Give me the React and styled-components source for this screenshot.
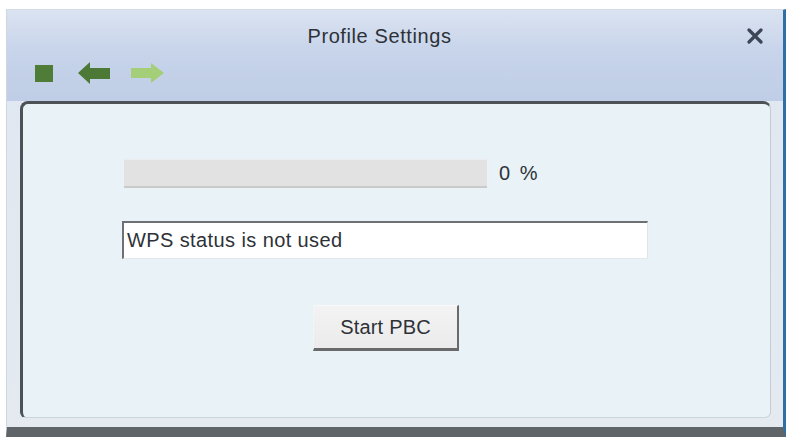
import React from "react";
import styled, { createGlobalStyle } from "styled-components";

const GlobalStyle = createGlobalStyle`
  html, body {
    margin: 0;
    padding: 0;
    background: #ffffff;
    overflow: hidden;
  }
  body {
    font-family: "Liberation Sans", Arial, sans-serif;
  }
`;

// Page wrapper, white strip above the dialog
const Page = styled.div`
  width: 792px;
  height: 437px;
  padding: 9px 6px 0 6px;
  box-sizing: border-box;
`;

// The dialog frame
const Window = styled.div`
  height: 428px;
  box-sizing: border-box;
  display: flex;
  flex-direction: column;
  border-left: 1px solid #cfd6de;
  border-top: 1px solid #d6dce3;
  border-right: 3px solid #2f6fa6;
  border-bottom: 10px solid #5f6469;
  background: linear-gradient(to bottom, #dfe7f1 0%, #e4eaf0 100%);
`;

const TitleBar = styled.div`
  height: 91px;
  display: flex;
  flex-direction: column;
  background: linear-gradient(to bottom, #dbe3f1 0%, #c7d4ea 45%, #bfcde6 100%);
`;

const TitleRow = styled.div`
  display: flex;
  align-items: center;
  padding-top: 14px;
  height: 24px;
`;

const Title = styled.div`
  flex: 1;
  text-align: center;
  padding-left: 6px;
  font-size: 20px;
  line-height: 24px;
  color: #2e3238;
  letter-spacing: 0.6px;
`;

const CloseButton = styled.div`
  width: 18px;
  height: 18px;
  margin-right: 19px;
  display: flex;
  align-items: center;
  justify-content: center;
`;

const Toolbar = styled.div`
  display: flex;
  align-items: center;
  padding: 14px 0 0 28px;
  height: 22px;
`;

const ToolIcon = styled.div`
  display: flex;
  margin-right: ${(p) => p.gap || 0}px;
`;

const Body = styled.div`
  flex: 1;
  display: flex;
  padding: 0 12px 9px 13px;
`;

// The inner sunken panel
const Panel = styled.div`
  flex: 1;
  box-sizing: border-box;
  border-top: 3px solid #4d5257;
  border-left: 3px solid #4d5257;
  border-right: 1px solid #c3ccd4;
  border-bottom: 1px solid #cdd5dc;
  border-radius: 8px 8px 6px 6px;
  background: #e8f2f7;
  padding: 55px 0 0 101px;
  display: flex;
  flex-direction: column;
  align-items: flex-start;
`;

const ProgressRow = styled.div`
  display: flex;
  align-items: center;
  gap: 12px;
`;

const ProgressTrack = styled.div`
  width: 363px;
  height: 29px;
  box-sizing: border-box;
  background: #e2e2e2;
  border-bottom: 2px solid #cacaca;
  border-top: 1px solid #ececec;
`;

const Percent = styled.span`
  font-size: 20px;
  color: #2e3238;
  letter-spacing: 2px;
`;

const StatusField = styled.div`
  margin: 33px 0 0 -2px;
  width: 526px;
  height: 38px;
  box-sizing: border-box;
  background: #ffffff;
  border-top: 2px solid #6d7175;
  border-left: 2px solid #6d7175;
  border-right: 1px solid #dfe4e9;
  border-bottom: 1px solid #e3e8ec;
  display: flex;
  align-items: center;
  padding-left: 3px;
  font-size: 20px;
  color: #2e3238;
  letter-spacing: 0.4px;
`;

const Button = styled.button`
  margin: 46px 0 0 189px;
  width: 146px;
  height: 46px;
  box-sizing: border-box;
  background: linear-gradient(to bottom, #f3f3f3, #ebebeb);
  border-top: 1px solid #f8f8f8;
  border-left: 1px solid #f4f4f4;
  border-right: 2px solid #6a6a6a;
  border-bottom: 3px solid #6a6a6a;
  font-family: "Liberation Sans", Arial, sans-serif;
  font-size: 20px;
  color: #2e3238;
  padding: 0;
  letter-spacing: 0.2px;
`;

const StopIcon = () => (
  <svg width="18" height="17" viewBox="0 0 18 17">
    <rect x="0" y="0" width="18" height="17" fill="#4f7c37" />
  </svg>
);

const BackIcon = () => (
  <svg width="32" height="22" viewBox="0 0 32 22">
    <polygon
      points="0,11 12,0 12,6 32,6 32,17 12,17 12,22"
      fill="#4c7935"
    />
  </svg>
);

const ForwardIcon = () => (
  <svg width="33" height="20" viewBox="0 0 33 20">
    <polygon
      points="33,10 20,0 20,5 0,5 0,15 20,15 20,20"
      fill="#a4cf78"
    />
  </svg>
);

const CloseIcon = () => (
  <svg width="16" height="16" viewBox="0 0 16 16">
    <path
      d="M2 2 L14 14 M14 2 L2 14"
      stroke="#3c4656"
      strokeWidth="3.2"
      strokeLinecap="round"
    />
  </svg>
);

const App = () => {
  const progress = 0;
  return (
    <Page>
      <GlobalStyle />
      <Window>
        <TitleBar>
          <TitleRow>
            <Title>Profile Settings</Title>
            <CloseButton>
              <CloseIcon />
            </CloseButton>
          </TitleRow>
          <Toolbar>
            <ToolIcon gap={25}>
              <StopIcon />
            </ToolIcon>
            <ToolIcon gap={21}>
              <BackIcon />
            </ToolIcon>
            <ToolIcon>
              <ForwardIcon />
            </ToolIcon>
          </Toolbar>
        </TitleBar>
        <Body>
          <Panel>
            <ProgressRow>
              <ProgressTrack />
              <Percent>{progress} %</Percent>
            </ProgressRow>
            <StatusField>WPS status is not used</StatusField>
            <Button>Start PBC</Button>
          </Panel>
        </Body>
      </Window>
    </Page>
  );
};

export default App;
